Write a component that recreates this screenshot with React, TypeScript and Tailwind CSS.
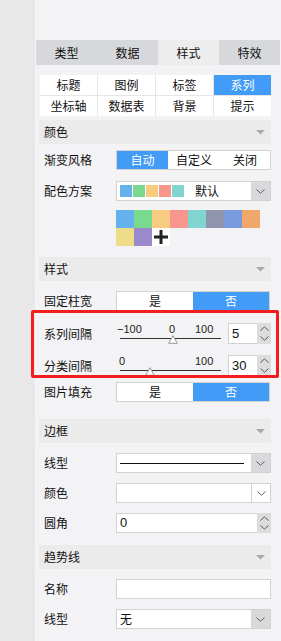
import React from "react";

const swatches = [
  "#65b1ed",
  "#79d98f",
  "#f8cc80",
  "#f9968c",
  "#80d5d0",
  "#9194ad",
  "#7a9ae0",
  "#f0a76a",
  "#eddd89",
  "#9b89cd",
];

function Chevron({ up }: { up?: boolean }) {
  return (
    <svg width="9" height="5" viewBox="0 0 9 5">
      <path
        d={up ? "M0.5 4.5 L4.5 0.8 L8.5 4.5" : "M0.5 0.5 L4.5 4.2 L8.5 0.5"}
        fill="none"
        stroke="#5a5a5a"
        strokeWidth="1"
      />
    </svg>
  );
}

function Caret() {
  return (
    <svg width="9" height="5" viewBox="0 0 9 5">
      <polygon points="0,0 9,0 4.5,4.5" fill="#a9a9a9" />
    </svg>
  );
}

function SectionHeader({ title, className = "" }: { title: string; className?: string }) {
  return (
    <div
      className={`ml-[4px] w-[232px] h-[24px] bg-[#ebebeb] flex items-center justify-between pl-[5px] pr-[6px] ${className}`}
    >
      <span>{title}</span>
      <Caret />
    </div>
  );
}

function Row({
  label,
  children,
  className = "",
  h = "h-[20px]",
}: {
  label: string;
  children: React.ReactNode;
  className?: string;
  h?: string;
}) {
  return (
    <div className={`flex items-center ${h} ${className}`}>
      <div className="w-[81px] pl-[9px] leading-none">{label}</div>
      <div className="w-[155px] h-full">{children}</div>
    </div>
  );
}

function YesNo() {
  return (
    <div className="h-full w-[154px] border border-[#d2d2d2] flex">
      <div className="flex-1 bg-white flex items-center justify-center">是</div>
      <div className="flex-1 bg-[#419bf7] text-white flex items-center justify-center">否</div>
    </div>
  );
}

function Spinner() {
  return (
    <div className="w-[14px] h-full bg-[#dcdcde] flex flex-col items-center justify-between py-[3px]">
      <Chevron up />
      <Chevron />
    </div>
  );
}

function NumberInput({ value, wide }: { value: string; wide?: boolean }) {
  return (
    <div className="flex h-full">
      <div
        className={`${wide ? "flex-1" : "w-[29px]"} bg-white border border-[#d2d2d2] border-r-0 flex items-center pl-[3px] font-['Liberation_Sans',sans-serif] text-[13px] text-[#111]`}
      >
        {value}
      </div>
      <Spinner />
    </div>
  );
}

function Select({ children, grayButton = true }: { children?: React.ReactNode; grayButton?: boolean }) {
  return (
    <div className="flex h-full border border-[#d2d2d2] bg-white">
      <div className="flex-1 flex items-center pl-[3px]">{children}</div>
      <div
        className={`w-[19px] flex items-center justify-center ${
          grayButton ? "bg-[#d9d9dc]" : "bg-white border-l border-[#d2d2d2]"
        }`}
      >
        <Chevron />
      </div>
    </div>
  );
}

function Slider({
  labels,
  pos,
}: {
  labels: { text: string; left: number }[];
  pos: number;
}) {
  return (
    <div className="relative w-[112px] h-full">
      {labels.map((l) => (
        <span
          key={l.text}
          className="absolute top-[0px] text-[11px] leading-[12px] text-[#222] font-['Liberation_Sans',sans-serif]"
          style={{ left: l.left }}
        >
          {l.text}
        </span>
      ))}
      <div className="absolute left-[4px] top-[15px] w-[101px] h-px bg-[#333]" />
      <svg
        className="absolute top-[12px]"
        style={{ left: pos - 5 }}
        width="10"
        height="9"
        viewBox="0 0 10 9"
      >
        <polygon points="5,0.7 9.3,8.3 0.7,8.3" fill="white" stroke="#9a9a9a" strokeWidth="1" />
      </svg>
    </div>
  );
}

export default function App() {
  const tabs = ["类型", "数据", "样式", "特效"];
  const subTabs = ["标题", "图例", "标签", "系列", "坐标轴", "数据表", "背景", "提示"];

  return (
    <div className="relative flex w-[281px] h-[641px] overflow-hidden text-[12px] text-[#111] font-['Noto_Sans_CJK_SC',sans-serif]">
      <div className="w-[35px] h-full bg-[#e8e8e9]" />
      <div className="flex-1 h-full bg-[#f3f3f5] pt-[40px] flex flex-col">
        {/* main tabs */}
        <div className="ml-[1px] w-[244px] h-[25px] grid grid-cols-4">
          {tabs.map((t, i) => (
            <div
              key={t}
              className={`flex items-center justify-center ${i === 2 ? "bg-[#ededee]" : "bg-[#d7d8db]"}`}
            >
              {t}
            </div>
          ))}
        </div>

        {/* sub tabs */}
        <div className="mt-[10px] ml-[5px] w-[231px] grid grid-cols-4 gap-px bg-[#e6e6e6]">
          {subTabs.map((t, i) => (
            <div
              key={t}
              className={`h-[20px] flex items-center justify-center ${
                i === 3 ? "bg-[#419bf7] text-white" : "bg-white"
              }`}
            >
              {t}
            </div>
          ))}
        </div>

        <SectionHeader title="颜色" className="mt-[4px]" />

        <Row label="渐变风格" className="mt-[6px]">
          <div className="h-full border border-[#d2d2d2] flex bg-white">
            <div className="w-[51px] bg-[#419bf7] text-white flex items-center justify-center">自动</div>
            <div className="w-[52px] flex items-center justify-center">自定义</div>
            <div className="flex-1 flex items-center justify-center">关闭</div>
          </div>
        </Row>

        <Row label="配色方案" className="mt-[11px]">
          <Select>
            <div className="flex gap-px">
              {swatches.slice(0, 5).map((c) => (
                <div key={c} className="w-[12px] h-[12px]" style={{ background: c }} />
              ))}
            </div>
            <span className="ml-[11px]">默认</span>
          </Select>
        </Row>

        <div className="mt-[9px] ml-[81px] w-[144px] grid grid-cols-8">
          {swatches.map((c) => (
            <div key={c} className="w-[18px] h-[18px]" style={{ background: c }} />
          ))}
          <div className="w-[18px] h-[18px] bg-white flex items-center justify-center">
            <svg width="14" height="14" viewBox="0 0 14 14">
              <rect x="5.5" y="0" width="3" height="14" fill="#222" />
              <rect x="0" y="5.5" width="14" height="3" fill="#222" />
            </svg>
          </div>
        </div>

        <SectionHeader title="样式" className="mt-[11px]" />

        <Row label="固定柱宽" className="mt-[10px]">
          <YesNo />
        </Row>

        <Row label="系列间隔" className="mt-[12px]" h="h-[21px]">
          <div className="flex h-full">
            <Slider
              labels={[
                { text: "−100", left: 1 },
                { text: "0", left: 53 },
                { text: "100", left: 79 },
              ]}
              pos={57}
            />
            <NumberInput value="5" />
          </div>
        </Row>

        <Row label="分类间隔" className="mt-[11px]" h="h-[21px]">
          <div className="flex h-full">
            <Slider
              labels={[
                { text: "0", left: 3 },
                { text: "100", left: 79 },
              ]}
              pos={34}
            />
            <NumberInput value="30" />
          </div>
        </Row>

        <Row label="图片填充" className="mt-[6px]">
          <YesNo />
        </Row>

        <SectionHeader title="边框" className="mt-[17px]" />

        <Row label="线型" className="mt-[10px]">
          <Select>
            <div className="w-[124px] h-px bg-[#111]" />
          </Select>
        </Row>

        <Row label="颜色" className="mt-[10px]">
          <Select grayButton={false} />
        </Row>

        <Row label="圆角" className="mt-[10px]">
          <NumberInput value="0" wide />
        </Row>

        <SectionHeader title="趋势线" className="mt-[12px]" />

        <Row label="名称" className="mt-[10px]">
          <div className="h-full border border-[#d2d2d2] bg-white" />
        </Row>

        <Row label="线型" className="mt-[10px]">
          <Select>
            <span>无</span>
          </Select>
        </Row>
      </div>

      {/* red annotation box over the spacing rows */}
      <div className="absolute left-[31px] top-[310px] w-[248px] h-[68px] border-[3px] border-[#f41c1c] rounded-[2px]" />
    </div>
  );
}
